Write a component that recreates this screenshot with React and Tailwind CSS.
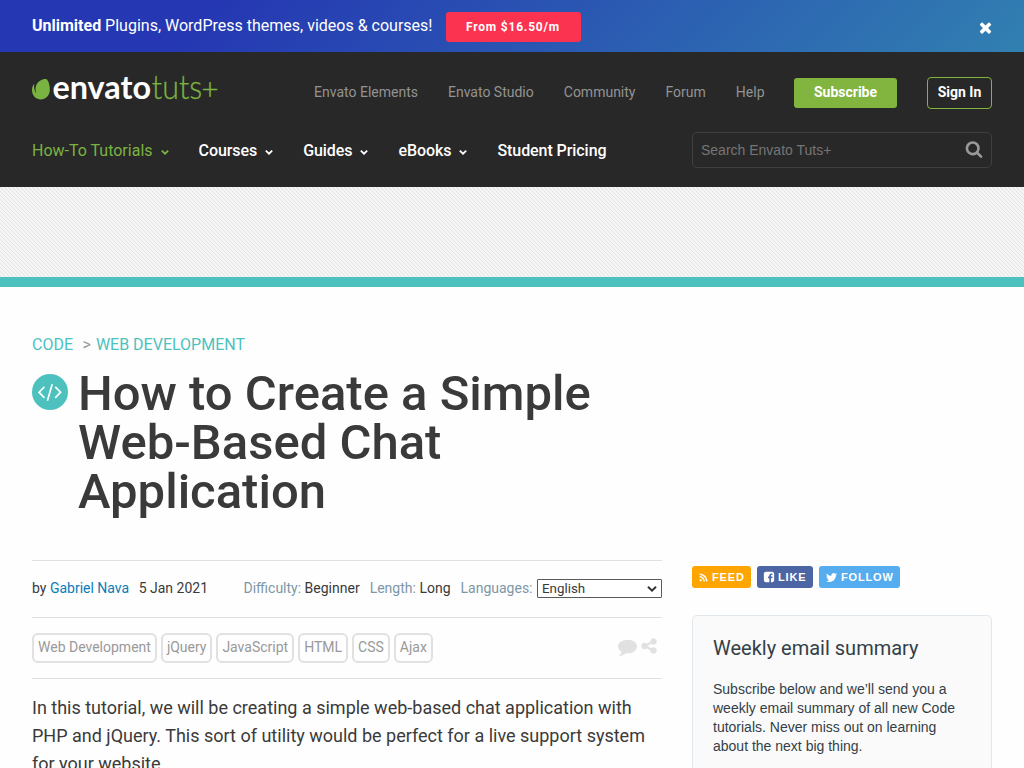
import React from "react";
import { FaTwitter, FaRss } from "react-icons/fa";

const ICONS = {
  search:
    "M1216 832q0-185-131.5-316.5t-316.5-131.5-316.5 131.5-131.5 316.5 131.5 316.5 316.5 131.5 316.5-131.5 131.5-316.5zm512 832q0 52-38 90t-90 38q-54 0-90-38l-343-342q-179 124-399 124-143 0-273.5-55.5t-225-150-150-225-55.5-273.5 55.5-273.5 150-225 225-150 273.5-55.5 273.5 55.5 225 150 150 225 55.5 273.5q0 220-124 399l343 343q37 37 37 90z",
  comment:
    "M1792 896q0 174-120 321.5t-326 233-450 85.5q-70 0-145-8-198 175-460 242-49 14-114 22-17 2-30.5-9t-17.5-29v-1q-3-4-.5-12t2-10 4.5-9.5l6-9 7-8.5 8-9q7-8 31-34.5t34.5-38 31-39.5 32.5-51 27-59 26-76q-157-89-247.5-220t-90.5-281q0-130 71-248.5t191-204.5 286-136.5 348-50.5q244 0 450 85.5t326 233 120 321.5z",
  share:
    "M1344 1024q133 0 226.5 93.5t93.5 226.5-93.5 226.5-226.5 93.5-226.5-93.5-93.5-226.5q0-12 2-34l-360-180q-92 86-218 86-133 0-226.5-93.5t-93.5-226.5 93.5-226.5 226.5-93.5q126 0 218 86l360-180q-2-22-2-34 0-133 93.5-226.5t226.5-93.5 226.5 93.5 93.5 226.5-93.5 226.5-226.5 93.5q-126 0-218-86l-360 180q2 22 2 34t-2 34l360 180q92-86 218-86z",
  times:
    "M1490 1322q0 40-28 68l-136 136q-28 28-68 28t-68-28l-294-294-294 294q-28 28-68 28t-68-28l-136-136q-28-28-28-68t28-68l294-294-294-294q-28-28-28-68t28-68l136-136q28-28 68-28t68 28l294 294 294-294q28-28 68-28t68 28l136 136q28 28 28 68t-28 68l-294 294 294 294q28 28 28 68z",
  facebook:
    "M1376 128q119 0 203.5 84.5t84.5 203.5v960q0 119-84.5 203.5t-203.5 84.5h-188v-595h199l30-232h-229v-148q0-56 23.5-84t91.5-28l122-1v-207q-63-9-178-9-136 0-217.5 80t-81.5 226v171h-200v232h200v595h-532q-119 0-203.5-84.5t-84.5-203.5v-960q0-119 84.5-203.5t203.5-84.5h960z",
};

function Icon({ name, className }) {
  return (
    <svg viewBox="0 0 1792 1792" fill="currentColor" className={className}>
      <path d={ICONS[name]} />
    </svg>
  );
}

function Chevron() {
  return (
    <svg viewBox="0 0 8 5" fill="none" stroke="currentColor" strokeWidth="1.8" className="ml-2 mt-[2px] h-[5px] w-2">
      <path d="M0.8 0.7 L4 3.7 L7.2 0.7" />
    </svg>
  );
}

function Logo() {
  return (
    <svg width="188" height="34" viewBox="0 -2 188 34" className="block overflow-visible">
      <path
        fill="#7bb342"
        d="M14.6 4.2C12.6 3.1 5.6 5.2 3.9 11.2C3.2 13.8 3.5 15.5 4.2 17.6C4.3 18 4 18.2 3.8 17.8C2.4 15.2 1.8 13 2.2 9.6C2.2 9.2 1.8 9.1 1.6 9.4C.4 11.2 0 13.2 0 15.2C0 20.8 4.2 24.4 8.8 24.4C13.6 24.4 17.2 21.2 17.8 15.8C18.2 11.8 16.6 5.3 14.6 4.2Z"
      />
      <text x="20.4" y="24" textLength="98.6" lengthAdjust="spacingAndGlyphs" fill="#fff" fontFamily="Lato" fontWeight="700" fontSize="32.5">
        envato
      </text>
      <text x="119.8" y="24" textLength="50.5" lengthAdjust="spacingAndGlyphs" fill="#7bb342" stroke="#7bb342" strokeWidth="0.3" fontFamily="Lato" fontWeight="300" fontSize="34">
        tuts
      </text>
      <text x="169.6" y="23.8" textLength="17" lengthAdjust="spacingAndGlyphs" fill="#7bb342" stroke="#7bb342" strokeWidth="0.4" fontFamily="Lato" fontWeight="300" fontSize="28">
        +
      </text>
    </svg>
  );
}

function Stripes() {
  return (
    <svg className="block h-full w-full" shapeRendering="crispEdges">
      <defs>
        <pattern id="stripes" width="4" height="4" patternUnits="userSpaceOnUse">
          <path fill="#e3e3e3" d="M0 0h1v1H0zM1 1h1v1H1zM2 2h1v1H2zM3 3h1v1H3z" />
        </pattern>
      </defs>
      <rect width="100%" height="100%" fill="url(#stripes)" />
    </svg>
  );
}

function NavItem({ children, menu = true, className = "text-white font-medium tracking-[-0.07px]" }) {
  return (
    <a className={`flex items-center ${className}`}>
      {children}
      {menu && <Chevron />}
    </a>
  );
}

function Tag({ children, className = "" }) {
  return (
    <span className={`flex h-[30px] items-center rounded-md border-2 border-[#e1e1e1] px-1 pb-px text-[14px] text-[#999] ${className}`}>
      {children}
    </span>
  );
}

function Meta({ label, value }) {
  return (
    <span>
      <span className="text-[#7d97a5]">{label}</span> {value}
    </span>
  );
}

const SOCIAL = "flex h-[22px] items-center rounded-[3px] text-[11px] font-bold tracking-[0.85px] text-white";

export default function App() {
  return (
    <div className="h-screen overflow-hidden bg-[#fefefe] font-['Roboto',sans-serif] text-[#3a3a3a] whitespace-nowrap">
      <div className="flex h-[52px] items-center justify-between bg-linear-[135deg,#2537b3_20%,#3180b1] px-8">
        <div className="flex items-center text-[16px] text-white">
          <p className="w-[400px]">
            <strong className="font-bold">Unlimited</strong> Plugins, WordPress themes, videos &amp; courses!
          </p>
          <a className="ml-[14px] mt-px flex h-[30px] w-[135px] items-center justify-center rounded-[3px] bg-[#fb3250] pr-px text-[12px] font-bold tracking-[0.8px]">
            From $16.50/m
          </a>
        </div>
        <Icon name="times" className="mt-[2px] -mr-[2px] h-[17px] w-[17px] text-white" />
      </div>

      <header className="h-[135px] bg-[#282828] px-8">
        <div className="flex h-20 items-center justify-between">
          <div className="-mt-1">
            <Logo />
          </div>
          <nav className="mt-[2px] flex items-center gap-[30px] text-[14px] text-[#939393]">
            <a className="-mt-[2px]">Envato Elements</a>
            <a className="-mt-[2px]">Envato Studio</a>
            <a className="-mt-[2px]">Community</a>
            <a className="-mt-[2px]">Forum</a>
            <a className="-mt-[2px] -mr-[0.5px]">Help</a>
            <a className="flex h-[30px] w-[103px] items-center justify-center rounded-[3px] bg-[#82b440] pb-px font-bold text-white">
              Subscribe
            </a>
            <a className="flex h-8 w-[65px] items-center justify-center rounded border border-[#82b440] pb-px font-bold text-white">
              Sign In
            </a>
          </nav>
        </div>
        <div className="flex h-9 items-center justify-between">
          <nav className="mt-[2px] flex items-center gap-[30px] text-[16px]">
            <NavItem className="text-[#7bb342]">How-To Tutorials</NavItem>
            <NavItem>Courses</NavItem>
            <NavItem>Guides</NavItem>
            <NavItem>eBooks</NavItem>
            <NavItem menu={false}>Student Pricing</NavItem>
          </nav>
          <div className="flex h-9 w-[300px] items-center justify-between rounded-[5px] border border-[#3f3f3f] pr-2 pl-2 text-[14px] text-[#757575]">
            <span className="font-['Liberation_Sans']">Search Envato Tuts+</span>
            <Icon name="search" className="-mt-[3px] h-[18px] w-[18px] text-[#999]" />
          </div>
        </div>
      </header>

      <div className="h-[90px] bg-[#f5f5f5]">
        <Stripes />
      </div>
      <div className="h-[10px] bg-[#4dc1be]" />

      <div className="flex gap-[30px] px-8">
        <main className="w-[630px]">
          <div className="mt-12 flex h-5 items-center text-[16px] text-[#4dc1be]">
            <a>CODE</a>
            <span className="ml-[9.5px] mr-[5px] text-[16px] text-[#999]">&gt;</span>
            <a>WEB DEVELOPMENT</a>
          </div>
          <div className="mt-[14px] flex">
            <svg width="36" height="36" viewBox="0 0 36 36" className="mt-[5px] mr-[10px] shrink-0">
              <circle cx="18" cy="18" r="18" fill="#4dc1be" />
              <path d="M12.4 12.8 L7 18.2 L12.4 23.8 M23.2 12.8 L28.6 18.2 L23.2 23.8 M20.2 10.2 L15.4 26.8" fill="none" stroke="#fff" strokeWidth="1.7" />
            </svg>
            <h1 className="text-[49px] leading-[49px] font-medium">
              How to Create a Simple
              <br />
              Web-Based Chat
              <br />
              Application
            </h1>
          </div>

          <div className="mt-11 flex h-[58px] items-center justify-between border-y border-[#e1e1e1] pb-[2px] text-[14px]">
            <div className="flex gap-[9.5px]">
              <span>
                by <a className="text-[#0a7cb8]">Gabriel Nava</a>
              </span>
              <span>5 Jan 2021</span>
            </div>
            <div className="flex items-center gap-[10px]">
              <Meta label="Difficulty:" value="Beginner" />
              <Meta label="Length:" value="Long" />
              <div className="flex items-center">
                <span className="mr-[4.5px] text-[#7d97a5]">Languages:</span>
                <div className="mt-px flex h-[19px] w-[125px] items-center justify-between rounded-[1px] border border-[#5a5a5a] bg-white pr-1 pl-1 text-[13.33px]">
                  English
                  <svg viewBox="0 0 10 6" className="h-[6px] w-[10px]" fill="none" stroke="#333" strokeWidth="2">
                    <path d="M1 0.8 L5 4.6 L9 0.8" />
                  </svg>
                </div>
              </div>
            </div>
          </div>

          <div className="flex h-[61px] items-center justify-between border-b border-[#e1e1e1]">
            <div className="flex gap-1">
              <Tag>Web Development</Tag>
              <Tag className="w-[51.5px]">jQuery</Tag>
              <Tag>JavaScript</Tag>
              <Tag>HTML</Tag>
              <Tag>CSS</Tag>
              <Tag>Ajax</Tag>
            </div>
            <div className="mr-1 flex items-center gap-[3px] text-[#e1e1e1]">
              <Icon name="comment" className="mb-1 h-[19px] w-[19px]" />
              <Icon name="share" className="mb-1 h-[18px] w-[18px]" />
            </div>
          </div>

          <p className="mt-[15px] text-[18px] leading-7">
            In this tutorial, we will be creating a simple web-based chat application with
            <br />
            PHP and jQuery. This sort of utility would be perfect for a live support system
            <br />
            for your website.
          </p>
        </main>

        <aside className="mt-[279px] w-[300px]">
          <div className="flex gap-[6px] font-['Liberation_Sans']">
            <a className={`${SOCIAL} w-[59px] bg-[#ffa500] pl-[7px]`}>
              <FaRss className="mr-1 h-[9px] w-[9px]" />
              FEED
            </a>
            <a className={`${SOCIAL} w-14 bg-[#4c66a4] pl-[6px]`}>
              <Icon name="facebook" className="mr-[3px] h-3 w-3" />
              LIKE
            </a>
            <a className={`${SOCIAL} w-[81px] bg-[#55acee] pl-[7px]`}>
              <FaTwitter className="mr-1 h-[11px] w-[11px]" />
              FOLLOW
            </a>
          </div>
          <section className="mt-[27px] h-[200px] rounded-[5px] border border-[#e1e8ed] bg-[#fafafa] px-5 pt-5 text-[#333f48]">
            <h2 className="text-[20px] leading-6">Weekly email summary</h2>
            <p className="mt-5 font-['Liberation_Sans'] text-[14px] leading-[19px]">
              Subscribe below and we’ll send you a
              <br />
              weekly email summary of all new Code
              <br />
              tutorials. Never miss out on learning
              <br />
              about the next big thing.
            </p>
          </section>
        </aside>
      </div>
    </div>
  );
}
